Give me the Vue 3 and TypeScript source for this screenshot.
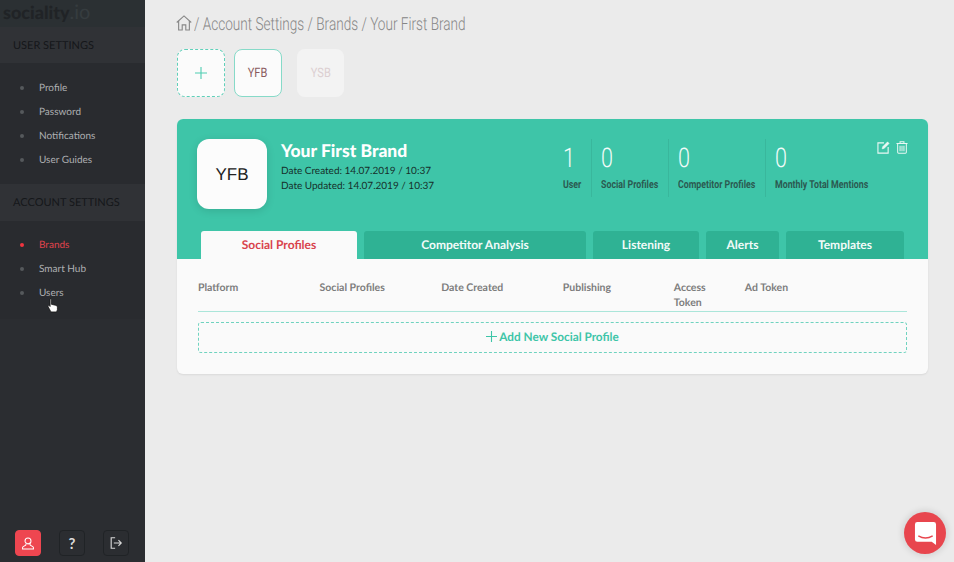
<template>
  <div class="app">
    <aside class="sidebar">
      <div class="logo"><b>sociality</b><span>.io</span></div>
      <section v-for="group in menu" :key="group.title" class="group">
        <h3 class="group-title">{{ group.title }}</h3>
        <ul class="group-list">
          <li v-for="item in group.items" :key="item" :class="{ active: item === 'Brands' }">
            <i class="dot"></i>{{ item }}
          </li>
        </ul>
      </section>
      <div class="side-footer">
        <button class="side-btn red" aria-label="Account">
          <svg width="14" height="15" viewBox="0 0 16 16" fill="none" stroke="#fff" stroke-width="1.2">
            <circle cx="8" cy="5" r="3.4" />
            <path d="M5.8 8.2 5.4 10 2.5 11.6c-.5.3-.7.7-.7 1.2v1.4h12.4v-1.4c0-.5-.2-.9-.7-1.2L10.6 10l-.4-1.8" />
          </svg>
        </button>
        <button class="side-btn" aria-label="Help">?</button>
        <button class="side-btn" aria-label="Log out">
          <svg width="14" height="14" viewBox="0 0 16 16" fill="none" stroke="#d8d8d8" stroke-width="1.3">
            <path d="M7 2H2.5v12H7" />
            <path d="M5.5 8h8.5M10.8 4.8 14 8l-3.2 3.2" />
          </svg>
        </button>
      </div>
    </aside>

    <main class="main">
      <div class="crumbs">
        <svg class="home" width="16" height="16" viewBox="0 0 17 17" fill="none" stroke="#888" stroke-width="1.2">
          <path d="M.8 8 8.500 1l7.700 7" />
          <path d="M2.800 6.500V16h3.800v-5.500h3.800V16h3.800V6.500" />
        </svg>
        <span class="narrow">/ Account Settings / Brands / Your First Brand</span>
      </div>

      <div class="tiles">
        <div class="tile add">
          <svg width="12" height="12" viewBox="0 0 13 13" stroke="#4fcdb2" stroke-width="1.200">
            <path d="M6.500 0v13M0 6.500h13" />
          </svg>
        </div>
        <div class="tile current"><span>YFB</span></div>
        <div class="tile muted"><span>YSB</span></div>
      </div>

      <div class="card">
        <header class="card-head">
          <div class="head-row">
            <div class="avatar">YFB</div>
            <div class="brand">
              <h1>Your First Brand</h1>
              <p>Date Created: 14.07.2019 / 10:37</p>
              <p>Date Updated: 14.07.2019 / 10:37</p>
            </div>
            <div class="stats">
              <div v-for="s in stats" :key="s.label" class="stat">
                <strong>{{ s.value }}</strong>
                <span>{{ s.label }}</span>
              </div>
            </div>
            <div class="actions">
              <svg width="13" height="13" viewBox="0 0 14 14" fill="none" stroke="#e9f8f4" stroke-width="1.200">
                <path d="M7.500 2H1v11h11V6.500" />
                <path d="M5.500 8.500 6 6.300 11.400.9l1.700 1.700L7.700 8z" fill="#e9f8f4" stroke-width=".5" />
              </svg>
              <svg width="12" height="13" viewBox="0 0 13 14" fill="none" stroke="#e9f8f4" stroke-width="1.100">
                <path d="M.5 2.600h12M4.400 2.400V.8h4.200v1.600M1.800 2.800v9.400c0 .6.400 1 1 1h7.400c.6 0 1-.4 1-1V2.800" />
                <path d="M4.400 5v6M6.500 5v6M8.600 5v6" />
              </svg>
            </div>
          </div>
          <nav class="tabs">
            <a v-for="t in tabs" :key="t.name" class="tab" :class="{ on: t.name === 'Social Profiles' }" :style="{ width: t.width + 'px' }">{{ t.name }}</a>
          </nav>
        </header>

        <div class="card-body">
          <div class="table-head">
            <span v-for="c in columns" :key="c">{{ c }}</span>
          </div>
          <div class="add-row">
            <svg width="11" height="11" viewBox="0 0 11 11" stroke="#3ec5a8" stroke-width="1.100">
              <path d="M5.500 0v11M0 5.500h11" />
            </svg>
            Add New Social Profile
          </div>
        </div>
      </div>
    </main>

    <svg class="cursor" width="12" height="15" viewBox="0 0 11 14">
      <path d="M2.600 1.200c.7-.6 1.400 0 1.400.7v4l3.600.8c1.300.3 2 .9 2 2v2.200l-.8 2.100H3.600L1 8.200c-.4-.8.5-1.500 1.200-.9l.6.6V1.900c0-.3 0-.5-.2-.7z" fill="#fff" stroke="#111" stroke-width=".7" />
    </svg>

    <div class="chat">
      <svg width="23" height="23" viewBox="0 0 22 24">
        <path d="M2.500 0h17A2.500 2.500 0 0 1 22 2.500V24l-4.500-3.300h-15A2.500 2.500 0 0 1 0 18.200V2.500A2.500 2.500 0 0 1 2.500 0z" fill="#fff" />
        <path d="M3.500 14.500c4.500 2.600 10.500 2.600 15 0" fill="none" stroke="#e8464e" stroke-width="1.400" />
      </svg>
    </div>
  </div>
</template>

<script setup lang="ts">
const menu = [
  { title: "USER SETTINGS", items: ["Profile", "Password", "Notifications", "User Guides"] },
  { title: "ACCOUNT SETTINGS", items: ["Brands", "Smart Hub", "Users"] },
];

const stats = [
  { value: 1, label: "User" },
  { value: 0, label: "Social Profiles" },
  { value: 0, label: "Competitor Profiles" },
  { value: 0, label: "Monthly Total Mentions" },
];

const tabs = [
  { name: "Social Profiles", width: 156 },
  { name: "Competitor Analysis", width: 222 },
  { name: "Listening", width: 106 },
  { name: "Alerts", width: 73 },
  { name: "Templates", width: 118 },
];

const columns = ["Platform", "Social Profiles", "Date Created", "Publishing", "Access Token", "Ad Token"];
</script>

<style>
html,
body {
  margin: 0;
  background: #ebebeb;
}
</style>

<style scoped>
.app {
  display: flex;
  height: 562px;
  overflow: hidden;
  position: relative;
  font-family: Lato, "Open Sans", sans-serif;
  text-rendering: geometricPrecision;
}

.sidebar {
  width: 145px;
  flex: none;
  display: flex;
  flex-direction: column;
  background: #2b2d31;
}

.logo {
  height: 27px;
  padding-left: 3px;
  background: #2b3033;
  color: #202326;
  font-size: 20px;
  line-height: 24px;
  box-sizing: border-box;
}

.logo b {
  font-size: 18px;
  font-weight: 900;
}

.logo span {
  color: #363c3f;
}

.group-title {
  margin: 0;
  height: 36px;
  padding-left: 13px;
  line-height: 37px;
  background: #303236;
  color: #15171a;
  font-size: 11px;
  font-weight: 400;
}

.group + .group .group-title {
  height: 37px;
}

.group-list {
  list-style: none;
  margin: 0;
  padding: 13px 0 12px;
  background: #292b2f;
}

.group + .group .group-list {
  padding: 12px 0 14px;
}

.group-list li {
  display: flex;
  align-items: center;
  height: 24px;
  padding-left: 20px;
  color: #aeb0b2;
  font-size: 10px;
}

.group-list li.active {
  color: #e0434c;
}

.dot {
  width: 4px;
  height: 4px;
  margin-right: 15px;
  border-radius: 50%;
  background: #55595c;
}

.active .dot {
  background: #f0343f;
}

.side-footer {
  margin-top: auto;
  display: flex;
  gap: 18px;
  padding: 0 0 6px 15px;
}

.side-btn {
  width: 26px;
  height: 26px;
  padding: 0;
  display: flex;
  align-items: center;
  justify-content: center;
  border: 1px solid #202326;
  border-radius: 4px;
  background: transparent;
  color: #dcdcdc;
  font: 700 15px Lato, sans-serif;
}

.side-btn.red {
  border-color: #ee4650;
  background: #ee4650;
}

.main {
  flex: 1;
  min-width: 0;
  padding: 0 26px 0 32px;
}

.crumbs {
  display: flex;
  align-items: center;
  gap: 2px;
  height: 48px;
  color: #868686;
  font-family: Roboto, sans-serif;
  font-size: 18px;
  font-weight: 300;
  white-space: nowrap;
}

.crumbs .home {
  margin: -3px 0 0 -1px;
}

.narrow {
  display: inline-block;
  transform: scaleX(0.755);
  transform-origin: left center;
}

.tiles {
  display: flex;
  gap: 9px;
  align-items: center;
  margin-top: 1px;
}

.tile {
  width: 48px;
  height: 48px;
  box-sizing: border-box;
  display: flex;
  align-items: center;
  justify-content: center;
  border-radius: 8px;
  background: #fbfbfb;
  font-family: Roboto, sans-serif;
  font-size: 13px;
  color: #8a5a5e;
}

.tile span {
  transform: scaleX(0.85);
}

.tile.add {
  border: 1px dashed #5fd0b9;
}

.tile.current {
  border: 1.5px solid #86dac8;
}

.tile.muted {
  width: 47px;
  margin-left: 6px;
  background: #f3f3f3;
  color: #dccfd1;
}

.card {
  margin-top: 22px;
  border-radius: 6px;
  overflow: hidden;
  background: #fafafa;
  box-shadow: 0 1px 2px rgba(0, 0, 0, 0.08);
}

.card-head {
  height: 140px;
  box-sizing: border-box;
  padding: 20px 20px 0;
  display: flex;
  flex-direction: column;
  background: #3ec5a8;
}

.head-row {
  display: flex;
  align-items: flex-start;
}

.avatar {
  width: 70px;
  height: 70px;
  box-sizing: border-box;
  padding-top: 1px;
  display: flex;
  align-items: center;
  justify-content: center;
  border-radius: 12px;
  background: #fcfcfc;
  color: #222;
  font-family: "Liberation Sans", sans-serif;
  font-size: 17px;
  box-shadow: 0 2px 8px rgba(0, 0, 0, 0.12);
}

.brand {
  margin-left: 14px;
}

.brand h1 {
  margin: 0 0 1px;
  color: #fff;
  font-size: 17.5px;
  line-height: 24px;
  font-weight: 900;
}

.brand p {
  margin: 0;
  color: #16302b;
  font-size: 10px;
  line-height: 15px;
}

.stats {
  margin-left: auto;
  display: grid;
  grid-template-columns: 38px 77px 97px 102px;
}

.stat {
  display: flex;
  flex-direction: column;
  align-items: flex-start;
  padding: 0 0 6px 9px;
  border-left: 1px solid #39b79c;
  font-family: Roboto, sans-serif;
}

.stat:first-child {
  border-left: 0;
  padding-left: 10px;
}

.stat strong {
  color: #f2fbf9;
  font-size: 27px;
  font-weight: 300;
  line-height: 38px;
  transform: scaleX(0.8);
  transform-origin: left center;
}

.stat span {
  margin-top: 1px;
  color: #2b5950;
  font-size: 11px;
  font-weight: 700;
  white-space: nowrap;
  transform: scaleX(0.8);
  transform-origin: left center;
}

.actions {
  display: flex;
  gap: 6px;
  margin-top: 2px;
  margin-left: 10px;
}

.tabs {
  margin-top: auto;
  margin-left: 4px;
  display: flex;
  gap: 7px;
}

.tab {
  height: 28px;
  flex: none;
  line-height: 28px;
  text-align: center;
  border-radius: 3px 3px 0 0;
  background: #2fb294;
  color: #f2fbf9;
  font-size: 12px;
  font-weight: 700;
}

.tab.on {
  background: #fafafa;
  color: #d8434c;
}

.card-body {
  height: 115px;
  box-sizing: border-box;
  padding: 22px 21px 0;
}

.table-head {
  display: grid;
  grid-template-columns: 121.6px 121.6px 121.6px 111px 71px 1fr;
  height: 30px;
  border-bottom: 1px solid #abe6da;
  color: #7d7d7d;
  font-size: 10.5px;
  font-weight: 700;
  line-height: 15px;
}

.table-head span {
  padding-right: 10px;
}

.add-row {
  margin-top: 10px;
  height: 31px;
  box-sizing: border-box;
  padding-bottom: 2px;
  display: flex;
  align-items: center;
  justify-content: center;
  gap: 2px;
  border: 1px dashed #6fd3bf;
  border-radius: 3px;
  color: #3ec5a8;
  font-size: 11.8px;
  font-weight: 700;
}

.cursor {
  position: absolute;
  left: 47px;
  top: 298px;
}

.chat {
  position: absolute;
  left: 904px;
  top: 512px;
  width: 42px;
  height: 42px;
  display: flex;
  align-items: center;
  justify-content: center;
  border-radius: 50%;
  background: #e8464e;
  box-shadow: 0 0 6px 2px rgba(0, 0, 0, 0.1);
}
</style>
